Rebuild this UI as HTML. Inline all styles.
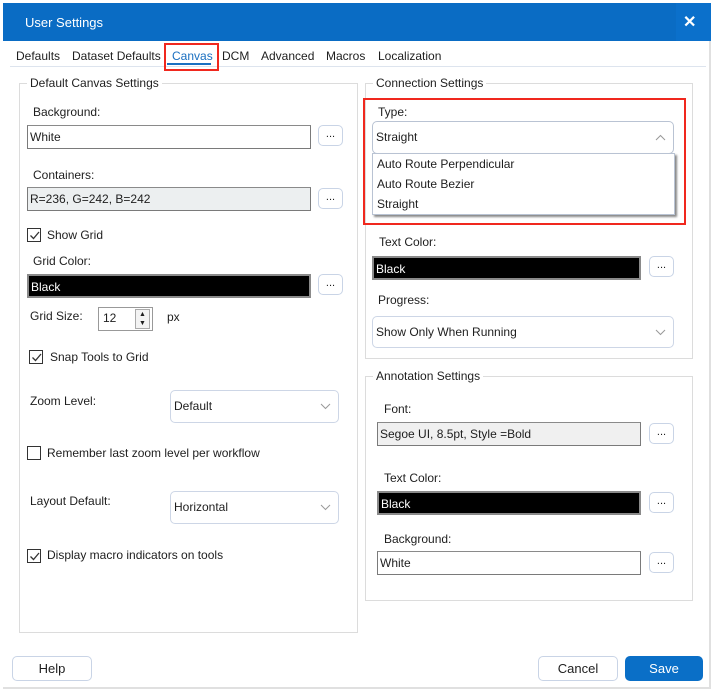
<!DOCTYPE html>
<html><head><style>
*{box-sizing:border-box;margin:0;padding:0}
body{width:715px;height:693px;background:#fff;font-family:"Liberation Sans",sans-serif;font-size:12px;color:#1e1e1e;position:relative;overflow:hidden}
.a{position:absolute;white-space:nowrap}
.t{line-height:14px}
.inp{position:absolute;border:1px solid #7a7a7a;border-top-color:#8a8a8a;background:#fff;padding:3px 2px;line-height:16px;height:24px}
.blk{background:#000;color:#fff;border:2px solid #8a8a8a}
.btn{position:absolute;width:25px;height:21px;border:1px solid #c9d4e6;border-radius:5px;background:#fff;text-align:center;line-height:16px;font-size:11px}
.grp{position:absolute;border:1px solid #dcdcdc}
.leg{position:absolute;background:#fff;padding:0 3px;line-height:14px;top:-8px;left:7px}
.cb{position:absolute;width:14px;height:14px;border:1px solid #333;background:#fff}
.cb svg{position:absolute;left:1px;top:1px}
.dd{position:absolute;border:1px solid #cdd6e6;border-radius:5px;background:#fff;padding-left:3px;line-height:30px}
.dd svg{position:absolute;right:7px;top:12px}
.pb{position:absolute;height:25px;border:1px solid #c9d4e6;border-radius:5px;background:#fff;text-align:center;line-height:23px;font-size:13px}
</style></head><body>
<div class="a" style="left:3px;top:3px;width:708px;height:38px;background:#0a6cc4"></div>
<div class="a" style="left:676px;top:3px;width:35px;height:38px;background:#0b70cb"></div>
<div class="a" style="left:25px;top:15px;color:#fff;font-size:13px">User Settings</div>
<div class="a" style="left:683px;top:12px;color:#fff;font-size:16px;font-weight:bold">✕</div>
<div class="a" style="left:709px;top:41px;width:2px;height:647px;background:#e0e0e0"></div>
<div class="a" style="left:3px;top:687px;width:708px;height:2px;background:#e0e0e0"></div>

<div class="a t" style="left:16px;top:49px">Defaults</div>
<div class="a t" style="left:72px;top:49px">Dataset Defaults</div>
<div class="a t" style="left:172px;top:49px;color:#1a6fc0">Canvas</div>
<div class="a" style="left:167px;top:63px;width:44px;height:2px;background:#1a6fc0"></div>
<div class="a t" style="left:222px;top:49px">DCM</div>
<div class="a t" style="left:261px;top:49px">Advanced</div>
<div class="a t" style="left:326px;top:49px">Macros</div>
<div class="a t" style="left:378px;top:49px">Localization</div>
<div class="a" style="left:10px;top:66px;width:696px;height:1px;background:#dde4ee"></div>
<div class="a" style="left:164px;top:43px;width:55px;height:28px;border:2px solid #f0281e"></div>

<div class="grp" style="left:19px;top:83px;width:339px;height:550px"><div class="leg">Default Canvas Settings</div></div>
<div class="a t" style="left:33px;top:105px">Background:</div>
<div class="inp" style="left:27px;top:125px;width:284px">White</div>
<div class="btn" style="left:318px;top:125px">...</div>
<div class="a t" style="left:33px;top:168px">Containers:</div>
<div class="inp" style="left:27px;top:187px;width:284px;background:#eceff0">R=236, G=242, B=242</div>
<div class="btn" style="left:318px;top:188px">...</div>
<div class="cb" style="left:27px;top:228px"><svg width="11" height="11"><path d="M1.5 5.5 L4.5 8.5 L10 2" stroke="#333" fill="none" stroke-width="1.3"/></svg></div>
<div class="a t" style="left:47px;top:228px">Show Grid</div>
<div class="a t" style="left:33px;top:254px">Grid Color:</div>
<div class="inp blk" style="left:27px;top:274px;width:284px">Black</div>
<div class="btn" style="left:318px;top:274px">...</div>
<div class="a t" style="left:30px;top:309px">Grid Size:</div>
<div class="a" style="left:98px;top:307px;width:55px;height:24px;border:1px solid #999;padding:2px 4px;line-height:16px">12</div>
<div class="a" style="left:135px;top:309px;width:15px;height:20px;border:1px solid #aaa;background:#f3f3f3;font-size:7px;line-height:9px;text-align:center">▲<br>▼</div>
<div class="a t" style="left:167px;top:310px">px</div>
<div class="cb" style="left:29px;top:350px"><svg width="11" height="11"><path d="M1.5 5.5 L4.5 8.5 L10 2" stroke="#333" fill="none" stroke-width="1.3"/></svg></div>
<div class="a t" style="left:50px;top:350px">Snap Tools to Grid</div>
<div class="a t" style="left:30px;top:394px">Zoom Level:</div>
<div class="dd" style="left:170px;top:390px;width:169px;height:33px">Default<svg width="11" height="7"><path d="M1 1 L5.5 5.5 L10 1" stroke="#999" fill="none"/></svg></div>
<div class="cb" style="left:27px;top:446px"></div>
<div class="a t" style="left:47px;top:446px">Remember last zoom level per workflow</div>
<div class="a t" style="left:30px;top:494px">Layout Default:</div>
<div class="dd" style="left:170px;top:491px;width:169px;height:33px">Horizontal<svg width="11" height="7"><path d="M1 1 L5.5 5.5 L10 1" stroke="#999" fill="none"/></svg></div>
<div class="cb" style="left:27px;top:549px"><svg width="11" height="11"><path d="M1.5 5.5 L4.5 8.5 L10 2" stroke="#333" fill="none" stroke-width="1.3"/></svg></div>
<div class="a t" style="left:47px;top:548px">Display macro indicators on tools</div>

<div class="grp" style="left:365px;top:83px;width:328px;height:276px"><div class="leg">Connection Settings</div></div>
<div class="a t" style="left:378px;top:105px">Type:</div>
<div class="dd" style="left:372px;top:121px;width:302px;height:33px;border-color:#b9c3d3">Straight<svg width="11" height="7"><path d="M1 6 L5.5 1.5 L10 6" stroke="#999" fill="none"/></svg></div>
<div class="a" style="left:372px;top:153px;width:303px;height:62px;background:#fff;border:1px solid #b9c3d3;box-shadow:2px 2px 2px #888;padding-left:4px;line-height:20px">Auto Route Perpendicular<br>Auto Route Bezier<br>Straight</div>
<div class="a" style="left:363px;top:98px;width:323px;height:127px;border:2px solid #f0281e"></div>
<div class="a t" style="left:379px;top:235px">Text Color:</div>
<div class="inp blk" style="left:372px;top:256px;width:269px">Black</div>
<div class="btn" style="left:649px;top:256px">...</div>
<div class="a t" style="left:378px;top:293px">Progress:</div>
<div class="dd" style="left:372px;top:316px;width:302px;height:32px">Show Only When Running<svg width="11" height="7"><path d="M1 1 L5.5 5.5 L10 1" stroke="#999" fill="none"/></svg></div>

<div class="grp" style="left:365px;top:376px;width:328px;height:225px"><div class="leg">Annotation Settings</div></div>
<div class="a t" style="left:384px;top:402px">Font:</div>
<div class="inp" style="left:377px;top:422px;width:264px;background:#f0f0f0">Segoe UI, 8.5pt, Style =Bold</div>
<div class="btn" style="left:649px;top:423px">...</div>
<div class="a t" style="left:384px;top:471px">Text Color:</div>
<div class="inp blk" style="left:377px;top:491px;width:264px">Black</div>
<div class="btn" style="left:649px;top:492px">...</div>
<div class="a t" style="left:384px;top:532px">Background:</div>
<div class="inp" style="left:377px;top:551px;width:264px">White</div>
<div class="btn" style="left:649px;top:552px">...</div>

<div class="pb" style="left:12px;top:656px;width:80px">Help</div>
<div class="pb" style="left:538px;top:656px;width:80px">Cancel</div>
<div class="pb" style="left:625px;top:656px;width:78px;background:#0a6fc7;border-color:#0a6fc7;color:#fff">Save</div>
</body></html>
